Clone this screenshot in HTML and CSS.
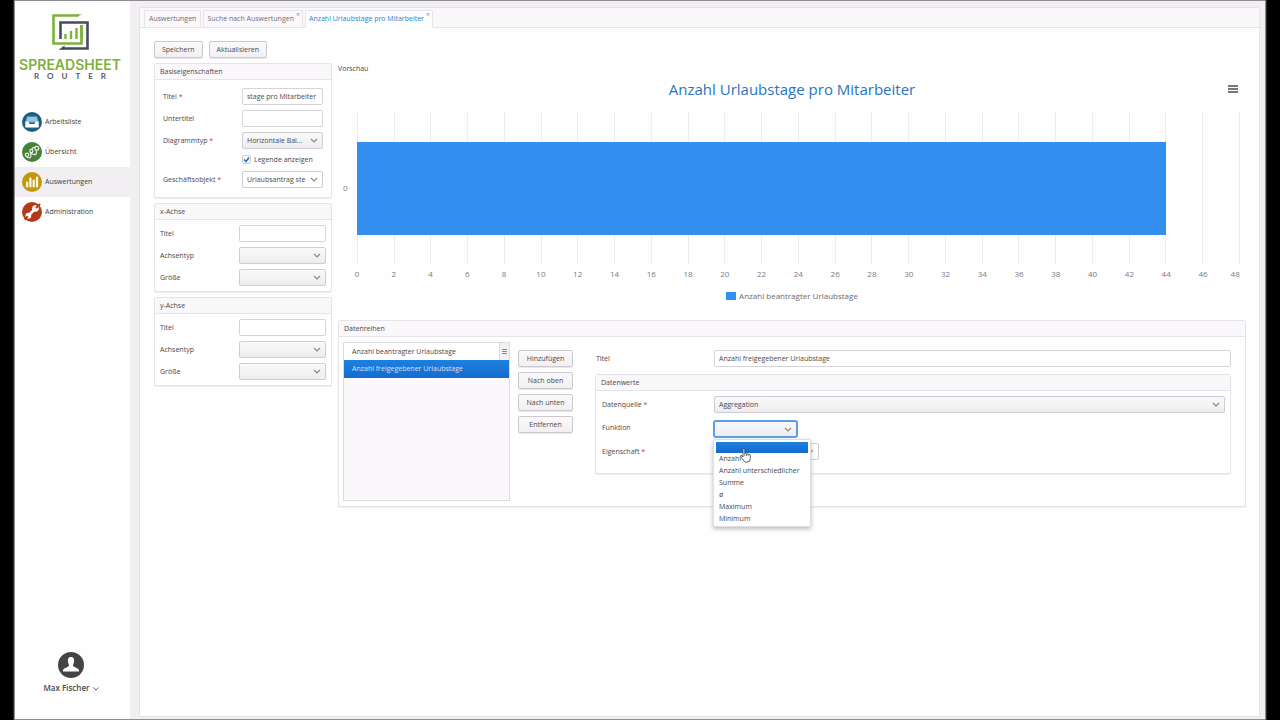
FILE: index.html
```html
<!DOCTYPE html>
<html lang="de">
<head>
<meta charset="utf-8">
<title>Spreadsheet Router – Auswertungen</title>
<link rel="stylesheet" href="styles.css">
</head>
<body>
<div class="app">
  <aside class="sidebar">
    <div class="brand">
      <svg class="brand-mark" viewBox="0 0 37 37" aria-hidden="true">
        <path d="M26.500 1.500H1.500V29.500H29.500V11" fill="none" stroke="#7db13c" stroke-width="2.600"/>
        <path d="M25 2.800 30 .2H25Z" fill="#7db13c"/>
        <path d="M8.500 25V8.500H35.500V34.500H11" fill="none" stroke="#454d5c" stroke-width="2.600"/>
        <path d="M6.500 35.800 12.500 31.500V35.800Z" fill="#454d5c"/>
        <path d="M13.500 25V20M19 25V17M24.500 25V14M29.500 25V11" stroke="#7db13c" stroke-width="2.400"/>
      </svg>
      <div class="brand-name">SPREADSHEET</div>
      <div class="brand-sub">ROUTER</div>
    </div>
    <nav class="nav">
      <a class="nav-item" href="#">
        <svg viewBox="0 0 20 20" aria-hidden="true"><circle cx="10" cy="10" r="10" fill="#1d5f80"/><path d="M5 4.500H15L16.500 10.500H3.500Z" fill="#7fb4d0"/><path d="M5.500 6H14.500M5 8H15" stroke="#c4e0ef" stroke-width=".8"/><path d="M3.300 9.500H6.500L7.500 12H12.500L13.500 9.500H16.700V15.500H3.300Z" fill="#fff"/></svg>
        <span>Arbeitsliste</span></a>
      <a class="nav-item" href="#">
        <svg viewBox="0 0 20 20" aria-hidden="true"><circle cx="10" cy="10" r="10" fill="#478039"/><g fill="none" stroke="#e4f2df" stroke-width="1.200" stroke-linecap="round"><circle cx="5" cy="12.800" r="1.700"/><circle cx="9.300" cy="9" r="1.600"/><circle cx="14.800" cy="6.200" r="1.900"/><path d="M5 15.300C8 16.800 9.500 15 8.800 12.800S8.800 11.200 10 11.800 12.500 13.500 14 12 13 9.500 14.800 8.500M10 6.800C10.500 5.500 12 5.200 12.800 5.600"/></g></svg>
        <span>Übersicht</span></a>
      <a class="nav-item active" href="#">
        <svg viewBox="0 0 20 20" aria-hidden="true"><circle cx="10" cy="10" r="10" fill="#c3980f"/><path d="M5.100 14.500V10.500M8.400 14.500V6.500M11.700 14.500V8.500M15 14.500V5.500" stroke="#fffbe9" stroke-width="2.200" stroke-linecap="round"/></svg>
        <span>Auswertungen</span></a>
      <a class="nav-item" href="#">
        <svg viewBox="0 0 20 20" aria-hidden="true"><circle cx="10" cy="10" r="10" fill="#b23a16"/><path d="M6 14 14 6" stroke="#fff" stroke-width="2.600"/><circle cx="13.500" cy="6.500" r="3.300" fill="#fff"/><circle cx="6.300" cy="13.700" r="2.900" fill="#fff"/><path d="M14 6 18 2M5.800 14.200 2.500 17.500" stroke="#b23a16" stroke-width="2"/></svg>
        <span>Administration</span></a>
    </nav>
    <button class="user" type="button">
      <svg class="avatar" viewBox="0 0 26 26" aria-hidden="true"><circle cx="13" cy="13" r="13" fill="#444346"/><path d="M13 5C10.400 5 9.700 6.800 9.900 9.200 10 11.200 11 12.200 11 13.500 11 15.200 6 15.500 5 18V19.500H21V18C20 15.500 15 15.200 15 13.500 15 12.200 16 11.200 16.100 9.200 16.300 6.800 15.600 5 13 5Z" fill="#fff"/></svg>
      <span class="user-name">Max Fischer <svg class="caret" viewBox="0 0 6 4" aria-hidden="true"><path d="M.5 .5 3 3 5.500 .5" fill="none" stroke="#666" stroke-width="1"/></svg></span>
    </button>
  </aside>

  <main class="main">
    <div class="tabs" role="tablist">
      <button class="tab" type="button" role="tab">Auswertungen</button>
      <button class="tab closable" type="button" role="tab">Suche nach Auswertungen<span class="close">×</span></button>
      <button class="tab closable selected" type="button" role="tab" aria-selected="true">Anzahl Urlaubstage pro Mitarbeiter<span class="close">×</span></button>
    </div>

    <div class="content">
      <div class="toolbar">
        <button class="btn" type="button">Speichern</button>
        <button class="btn" type="button">Aktualisieren</button>
      </div>

      <div class="columns">
        <div class="settings">
          <section class="panel">
            <h2 class="panel-head">Basiseigenschaften</h2>
            <div class="fields base">
              <label for="b-title">Titel <b>*</b></label><input class="ctl" id="b-title" type="text" value="stage pro Mitarbeiter">
              <label for="b-sub">Untertitel</label><input class="ctl" id="b-sub" type="text">
              <label for="b-type">Diagrammtyp <b>*</b></label><select class="ctl" id="b-type"><option>Horizontale Bal...</option></select>
              <div class="check"><input id="b-legend" type="checkbox" checked><label for="b-legend">Legende anzeigen</label></div>
              <label for="b-obj">Geschäftsobjekt <b>*</b></label><select class="ctl plain" id="b-obj"><option>Urlaubsantrag ste</option></select>
            </div>
          </section>
          <section class="panel">
            <h2 class="panel-head">x-Achse</h2>
            <div class="fields axis-fields">
              <label for="x-title">Titel</label><input class="ctl" id="x-title" type="text">
              <label for="x-type">Achsentyp</label><select class="ctl" id="x-type"><option></option></select>
              <label for="x-size">Größe</label><select class="ctl" id="x-size"><option></option></select>
            </div>
          </section>
          <section class="panel">
            <h2 class="panel-head">y-Achse</h2>
            <div class="fields axis-fields">
              <label for="y-title">Titel</label><input class="ctl" id="y-title" type="text">
              <label for="y-type">Achsentyp</label><select class="ctl" id="y-type"><option></option></select>
              <label for="y-size">Größe</label><select class="ctl" id="y-size"><option></option></select>
            </div>
          </section>
        </div>

        <div class="preview">
          <div class="preview-label">Vorschau</div>
          <section class="chart">
            <header class="chart-head">
              <h1>Anzahl Urlaubstage pro Mitarbeiter</h1>
              <button class="burger" type="button" aria-label="Menü"><i></i><i></i><i></i></button>
            </header>
            <div class="chart-body">
              <div class="category">0</div>
              <div class="plot"><div class="bar"></div></div>
              <div class="ticks">
                <span>0</span><span>2</span><span>4</span><span>6</span><span>8</span><span>10</span><span>12</span><span>14</span><span>16</span><span>18</span><span>20</span><span>22</span><span>24</span><span>26</span><span>28</span><span>30</span><span>32</span><span>34</span><span>36</span><span>38</span><span>40</span><span>42</span><span>44</span><span>46</span><span class="last">48</span>
              </div>
            </div>
            <div class="legend"><i></i>Anzahl beantragter Urlaubstage</div>
          </section>

          <section class="panel series">
            <h2 class="panel-head">Datenreihen</h2>
            <div class="series-body">
              <div class="list" role="listbox" aria-label="Datenreihen">
                <div class="list-row" role="option">Anzahl beantragter Urlaubstage<button class="grip" type="button" aria-label="Spalten"><i></i><i></i><i></i></button></div>
                <div class="list-row chosen" role="option" aria-selected="true">Anzahl freigegebener Urlaubstage</div>
              </div>
              <div class="actions">
                <button class="btn" type="button">Hinzufügen</button>
                <button class="btn" type="button">Nach oben</button>
                <button class="btn" type="button">Nach unten</button>
                <button class="btn" type="button">Entfernen</button>
              </div>
              <div class="detail">
                <div class="detail-title"><label for="s-title">Titel</label><input class="ctl" id="s-title" type="text" value="Anzahl freigegebener Urlaubstage"></div>
                <section class="panel values">
                  <h2 class="panel-head">Datenwerte</h2>
                  <div class="fields value-fields">
                    <label for="v-src">Datenquelle <b>*</b></label><select class="ctl" id="v-src"><option>Aggregation</option></select>
                    <label for="v-fn">Funktion</label>
                    <div class="dropdown">
                      <select class="ctl focused" id="v-fn"><option></option></select>
                      <ul class="menu">
                        <li class="hover"></li><li>Anzahl</li><li>Anzahl unterschiedlicher</li><li>Summe</li><li>ø</li><li>Maximum</li><li>Minimum</li>
                      </ul>
                      <svg class="pointer" viewBox="0 0 11 15" aria-hidden="true"><path d="M3 9V1.500Q3 .5 3.900 .5T4.800 1.500V5.500Q5.700 4.900 6.500 5.900 7.500 5.300 8.200 6.300 10.300 5.800 10.300 7.800V10.500Q10.300 14.300 6.800 14.300 4.300 14.300 3.200 12L.7 8.500Q.5 7 1.900 7.600Z" fill="#fff" stroke="#333" stroke-width=".8"/><path d="M4.800 5.500V8M6.500 6V8M8.200 6.300V8" stroke="#333" stroke-width=".6"/></svg>
                    </div>
                    <label for="v-prop">Eigenschaft <b>*</b></label><select class="ctl plain prop" id="v-prop"><option></option></select>
                  </div>
                </section>
              </div>
            </div>
          </section>
        </div>
      </div>
    </div>
  </main>
</div>
</body>
</html>
```
FILE: styles.css
```css
* { box-sizing: border-box; }

body {
  margin: 0;
  background: #000;
  color: #4a494c;
  font: 7px/10px "Open Sans", "Noto Sans", sans-serif;
}

button, input, select { font: inherit; color: inherit; margin: 0; }
h1, h2, ul { margin: 0; padding: 0; font-weight: 400; }

.app {
  display: flex;
  min-height: 100vh;
  margin: 0 14px;
  background: #f1eff2;
  border: 1px solid #8e8c90;
  box-shadow: 0 0 2px #777;
}

/* Sidebar */
.sidebar {
  display: flex;
  flex-direction: column;
  width: 115px;
  flex: none;
  background: #fefefe;
}
.brand {
  display: flex;
  flex-direction: column;
  align-items: center;
  height: 106px;
  padding: 13px 5px 0 0;
}
.brand-mark { width: 37px; height: 37px; }
.brand-name { margin-top: 5px; font: 600 14px/17px Inter, sans-serif; color: #7db13c; }
.brand-sub { margin-left: 8px; font: 700 8px/6px Lato, sans-serif; letter-spacing: 8px; color: #555b68; }

.nav-item {
  display: flex;
  align-items: center;
  gap: 3px;
  height: 30px;
  padding-left: 7px;
  color: #3e3d40;
  text-decoration: none;
}
.nav-item svg { width: 20px; height: 20px; }
.nav-item.active { background: #f1eff2; }

.user {
  display: flex;
  flex-direction: column;
  align-items: center;
  gap: 4px;
  margin-top: auto;
  padding: 0 3px 25px 0;
  border: 0;
  background: none;
  font: 600 8px/12px "Open Sans", sans-serif;
}
.avatar { width: 26px; height: 26px; }
.caret { width: 6px; height: 4px; margin-left: 1px; }

/* Main area */
.main {
  flex: 1;
  min-width: 0;
  margin: 6px 5px 2px 9px;
  background: #fefefe;
  border: 1px solid #e6e4e8;
}
.tabs {
  display: flex;
  align-items: flex-end;
  gap: 2px;
  height: 20px;
  padding-left: 4px;
  background: #faf8fb;
  border-bottom: 1px solid #e6e4e8;
}
.tab {
  position: relative;
  height: 18px;
  margin-bottom: -1px;
  padding: 0 4px;
  border: 1px solid #e6e4e8;
  background: #faf8fb;
  color: #706f73;
  white-space: nowrap;
}
.tab.closable { padding-right: 8px; padding-left: 3px; }
.tab.selected { background: #fefefe; border-bottom-color: #fefefe; color: #2c7fcb; }
.close { position: absolute; top: -1px; right: 2px; color: #8d8b90; }

.content { padding: 13px 13px 13px 14px; }
.toolbar { display: flex; gap: 6px; }
.btn {
  height: 17px;
  padding: 0 7px;
  border: 1px solid #cbc9cd;
  border-radius: 2px;
  background: linear-gradient(#fbfafb, #f1eff2);
  box-shadow: 0 1px 0 #e9e7ea;
  text-align: center;
}

.columns { display: flex; gap: 6px; }
.settings {
  display: flex;
  flex-direction: column;
  gap: 5px;
  flex: none;
  width: 178px;
  padding-top: 5px;
}
.panel {
  background: #fefefe;
  border: 1px solid #e6e4e8;
  border-radius: 2px;
  box-shadow: 0 1px 1px #efedf0;
}
.panel-head {
  height: 16px;
  padding: 0 5px;
  border-bottom: 1px solid #e6e4e8;
  background: #faf8fb;
  font-size: 7px;
  line-height: 15px;
}
.fields { display: grid; align-items: center; }
.fields b { font-weight: 400; color: #d0353f; }
.base { grid-template-columns: 79px 1fr; row-gap: 5px; padding: 8px 8px 9px; }
.axis-fields { grid-template-columns: 79px 1fr; row-gap: 5px; padding: 5px; }

.ctl {
  width: 100%;
  height: 17px;
  padding: 0 4px;
  border: 1px solid #d6d4d8;
  border-radius: 2px;
  background: #fff;
  outline: 0;
}
select.ctl {
  appearance: none;
  padding-right: 14px;
  border-color: #cfcdd1;
  background:
    url("data:image/svg+xml,%3Csvg xmlns='http://www.w3.org/2000/svg' width='8' height='5'%3E%3Cpath d='M1 1 4 4 7 1' fill='none' stroke='%23888' stroke-width='1.200'/%3E%3C/svg%3E") right 4px center no-repeat,
    linear-gradient(#faf9fa, #eeecef);
}
select.plain {
  background:
    url("data:image/svg+xml,%3Csvg xmlns='http://www.w3.org/2000/svg' width='8' height='5'%3E%3Cpath d='M1 1 4 4 7 1' fill='none' stroke='%23888' stroke-width='1.200'/%3E%3C/svg%3E") right 4px center no-repeat,
    #fff;
}
.check { grid-column: 2; display: flex; align-items: center; gap: 3px; height: 11px; margin-bottom: 1px; }
.check input {
  appearance: none;
  width: 9px;
  height: 9px;
  border: 1px solid #cfcdd1;
  border-radius: 2px;
  background: url("data:image/svg+xml,%3Csvg xmlns='http://www.w3.org/2000/svg' viewBox='0 0 7 7'%3E%3Cpath d='M1 3.500 3 5.500 6 1.500' fill='none' stroke='%232071c4' stroke-width='1.500'/%3E%3C/svg%3E") center / 7px 7px no-repeat #f6f8fb;
}

/* Chart */
.preview { flex: 1; min-width: 0; padding-top: 6px; }
.preview-label { height: 10px; }
.chart { padding-bottom: 15px; }
.chart-head { position: relative; height: 38px; text-align: center; }
.chart-head h1 { font-size: 15px; line-height: 31px; color: #2a75bd; }
.burger {
  position: absolute;
  top: 11px;
  right: 8px;
  display: grid;
  gap: 1px;
  width: 10px;
  padding: 0;
  border: 0;
  background: none;
}
.burger i { height: 2px; background: #777; }
.chart-body {
  display: grid;
  grid-template-columns: 19px 1fr;
  grid-template-rows: 152px 20px;
  padding-right: 6px;
  font-size: 8px;
  color: #7b7a7e;
}
.category { align-self: center; padding-left: 5px; }
.plot {
  display: flex;
  align-items: center;
  background: repeating-linear-gradient(90deg, #eeecef 0 1px, transparent 1px calc((100% - 1px) / 24));
}
.bar { width: calc(100% * 44 / 48); height: 93px; background: #328eef; }
.ticks { grid-column: 2; display: flex; justify-content: space-between; align-items: center; }
.ticks span { display: flex; justify-content: center; width: 0; }
.ticks .last { justify-content: flex-end; }
.legend {
  display: flex;
  align-items: center;
  justify-content: center;
  gap: 3px;
  height: 18px;
  margin-top: 3px;
  font-size: 8px;
  color: #6b6a6e;
}
.legend i { width: 10px; height: 8px; background: #328eef; }

/* Series editor */
.series-body { display: flex; padding: 5px 5px 5px 4px; }
.list {
  width: 167px;
  flex: none;
  min-height: 159px;
  border: 1px solid #dedce0;
  background: #faf8fb;
}
.list-row {
  display: flex;
  align-items: center;
  justify-content: space-between;
  height: 17px;
  padding-left: 8px;
  background: #fff;
}
.list-row.chosen { height: 18px; background: linear-gradient(#1d80df, #166bd0); color: #cde2f8; }
.grip {
  display: grid;
  align-content: center;
  gap: 1px;
  width: 10px;
  height: 17px;
  padding: 0 2px;
  border: 0;
  border-left: 1px solid #dedce0;
  background: #f3f1f4;
}
.grip i { height: 1px; background: #8c8a8f; }
.actions {
  display: flex;
  flex-direction: column;
  gap: 5px;
  flex: none;
  width: 55px;
  margin: 8px 22px 0 8px;
}
.actions .btn { padding: 0; }
.detail { flex: 1; min-width: 0; padding: 8px 9px 0 0; }
.detail-title { display: grid; grid-template-columns: 118px 1fr; align-items: center; padding-left: 1px; }
.detail-title label { line-height: 17px; }
.values { margin-top: 7px; padding-bottom: 13px; }
.value-fields { grid-template-columns: 112px 1fr; padding: 5px 5px 0 6px; row-gap: 5px; }
.dropdown { position: relative; width: 85px; margin: 2px 0 0 -1px; }
.dropdown .ctl { height: 18px; display: block; }
.ctl.focused { border: 2px solid #5a9fe4; border-radius: 3px; }
.prop { width: 105px; }
.menu {
  position: absolute;
  top: 19px;
  left: 0;
  z-index: 1;
  width: 98px;
  padding: 2px 2px 1px;
  border: 1px solid #e0dee2;
  border-radius: 2px;
  background: #fff;
  box-shadow: 0 2px 4px #bbb9bd;
  list-style: none;
  line-height: 12px;
}
.menu li { height: 12px; padding-left: 3px; white-space: nowrap; }
.menu .hover { height: 11px; background: linear-gradient(#1d80df, #166bd0); }
.pointer { position: absolute; top: 28px; left: 27px; z-index: 2; width: 11px; height: 15px; }
```
